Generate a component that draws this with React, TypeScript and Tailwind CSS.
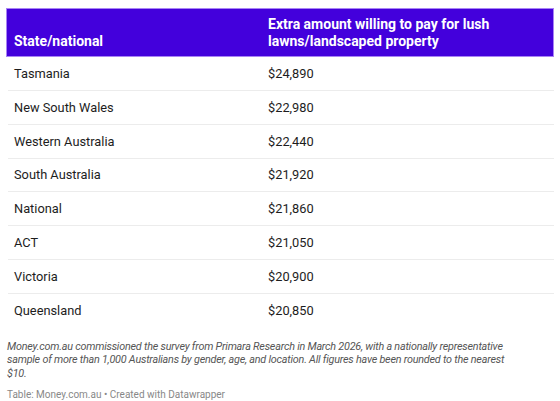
const rows = [
  ["Tasmania", "$24,890"],
  ["New South Wales", "$22,980"],
  ["Western Australia", "$22,440"],
  ["South Australia", "$21,920"],
  ["National", "$21,860"],
  ["ACT", "$21,050"],
  ["Victoria", "$20,900"],
  ["Queensland", "$20,850"],
];

const App = () => {
  return (
    <div className="w-[560px] h-[401px] bg-white font-['Roboto',sans-serif] text-[#1d1d1d] overflow-hidden">
      <div className="pt-[8px] px-[6px]">
        {/* Header */}
        <div className="grid grid-cols-[254px_1fr] bg-[#4300dc] border border-[#a983f5] text-white font-bold text-[14px] leading-[17px]">
          <div className="flex items-end px-[7px] pt-[7px] pb-[6px]">State/national</div>
          <div className="px-[7px] pt-[7px] pb-[6px]">
            Extra amount willing to pay for lush
            <br />
            lawns/landscaped property
          </div>
        </div>

        {/* Rows */}
        {rows.map(([name, value], i) => (
          <div
            key={name}
            className={`grid grid-cols-[254px_1fr] h-[33.85px] items-center text-[12.8px] ml-[2px] ${
              i < rows.length - 1 ? "border-b border-[#ececec]" : ""
            }`}
          >
            <div className="pl-[6px]">{name}</div>
            <div className="pl-[6px]">{value}</div>
          </div>
        ))}
      </div>

      {/* Notes */}
      <div className="px-[7px] mt-[12px] text-[10.8px] tracking-[-0.22px] leading-[13.5px] italic text-[#555555] whitespace-nowrap">
        Money.com.au commissioned the survey from Primara Research in March 2026, with a nationally representative
        <br />
        sample of more than 1,000 Australians by gender, age, and location. All figures have been rounded to the nearest
        <br />
        $10.
      </div>
      <div className="px-[7px] mt-[8px] text-[10px] leading-[13px] text-[#888888]">
        Table: Money.com.au • Created with Datawrapper
      </div>
    </div>
  );
};

export default App;
